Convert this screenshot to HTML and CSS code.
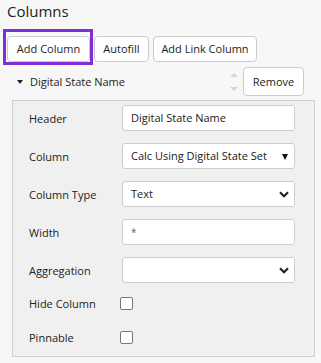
FILE: index.html
```html
<!DOCTYPE html>
<html>
<head>
<meta charset="utf-8">
<link rel="stylesheet" href="styles.css">
</head>
<body>
<div class="page">
  <h1 class="title">Columns</h1>
  <div class="toolbar">
    <button class="btn">Add Column</button>
    <button class="btn">Autofill</button>
    <button class="btn">Add Link Column</button>
    <div class="focus-ring"></div>
  </div>
  <div class="item-head">
    <span class="caret"></span>
    <span class="item-name">Digital State Name</span>
    <span class="sorter">
      <span class="arrow-up"></span>
      <span class="arrow-down"></span>
    </span>
    <button class="btn btn-remove">Remove</button>
  </div>
  <div class="panel">
    <div class="row">
      <span class="label">Header</span>
      <div class="field">Digital State Name</div>
    </div>
    <div class="row">
      <span class="label">Column</span>
      <div class="field select">Calc Using Digital State Set<span class="tri"></span></div>
    </div>
    <div class="row">
      <span class="label">Column Type</span>
      <div class="field select">Text<svg class="chev" width="10" height="7" viewBox="0 0 10 7"><path d="M1 1.2 L5 5.2 L9 1.2" fill="none" stroke="#222" stroke-width="2.2"/></svg></div>
    </div>
    <div class="row">
      <span class="label">Width</span>
      <div class="field star">*</div>
    </div>
    <div class="row">
      <span class="label">Aggregation</span>
      <div class="field select"><svg class="chev" width="10" height="7" viewBox="0 0 10 7"><path d="M1 1.2 L5 5.2 L9 1.2" fill="none" stroke="#222" stroke-width="2.2"/></svg></div>
    </div>
    <div class="row check-row first-check">
      <span class="label">Hide Column</span>
      <span class="checkbox"></span>
    </div>
    <div class="row check-row">
      <span class="label">Pinnable</span>
      <span class="checkbox"></span>
    </div>
  </div>
</div>
</body>
</html>
```
FILE: styles.css
```css
* { box-sizing: border-box; }
html, body { margin: 0; padding: 0; }
body {
  background: #f7f7f7;
  font-family: "Segoe UI", "Open Sans", "Noto Sans", sans-serif;
  font-size: 11px;
  color: #222;
  width: 321px;
  height: 363px;
  overflow: hidden;
}
.page { padding: 0 0 0 7px; }
.title {
  margin: 0;
  padding-top: 1px;
  font-size: 15px;
  font-weight: normal;
  line-height: 20px;
  color: #222;
  height: 36px;
}
.toolbar {
  position: relative;
  display: flex;
  gap: 4px;
  height: 26px;
}
.btn {
  font-family: inherit;
  font-size: 11px;
  color: #222;
  background: #fff;
  border: 1px solid #ccc;
  border-radius: 4px;
  height: 26px;
  padding: 0;
  line-height: 24px;
  margin: 0;
  white-space: nowrap;
  text-align: center;
}
.toolbar .btn:nth-child(1) { width: 83px; }
.toolbar .btn:nth-child(2) { width: 55px; }
.toolbar .btn:nth-child(3) { width: 104px; }
.focus-ring {
  position: absolute;
  left: -4px;
  top: -7px;
  width: 90px;
  height: 36px;
  border: 3px solid #7e2fd8;
  pointer-events: none;
}
.item-head {
  display: flex;
  align-items: center;
  height: 34px;
  padding-top: 5px;
  white-space: nowrap;
}
.caret {
  width: 0; height: 0;
  border-left: 3.5px solid transparent;
  border-right: 3.5px solid transparent;
  border-top: 4px solid #222;
  margin-left: 10px;
  margin-right: 7px;
}
.item-name { flex: 0 0 199px; width: 199px; }
.sorter {
  display: flex;
  flex-direction: column;
  justify-content: space-between;
  height: 18px;
  width: 10px;
  align-items: center;
  margin-top: 1px;
}
.arrow-up {
  width: 0; height: 0;
  border-left: 4px solid transparent;
  border-right: 4px solid transparent;
  border-bottom: 4px solid #d6d6d6;
}
.arrow-down {
  width: 0; height: 0;
  border-left: 4px solid transparent;
  border-right: 4px solid transparent;
  border-top: 4px solid #d6d6d6;
}
.btn-remove {
  margin-left: 4px;
  width: 61px;
  height: 29px;
  line-height: 27px;
}
.panel {
  margin: 4px 0 0 5px;
  width: 303px;
  height: 257px;
  background: #f0f0f0;
  border: 1px solid #cfcfcf;
  padding: 4px 0 0 16px;
}
.row {
  display: flex;
  align-items: center;
  height: 26px;
  margin-bottom: 12px;
}
.label { width: 93px; flex: 0 0 93px; }
.field {
  width: 173px;
  height: 26px;
  background: #fff;
  border: 1px solid #cccccc;
  border-radius: 3px;
  padding: 0 8px;
  line-height: 24px;
  position: relative;
  white-space: nowrap;
}
.star { color: #666; font-size: 10px; }
.select .tri {
  position: absolute;
  right: 6px;
  top: 10px;
  width: 0; height: 0;
  border-left: 3.5px solid transparent;
  border-right: 3.5px solid transparent;
  border-top: 6px solid #111;
}
.select .chev {
  position: absolute;
  right: 5px;
  top: 9px;
}
.check-row { height: 16px; margin-bottom: 18px; }
.first-check { margin-top: 11px; }
.checkbox {
  width: 13px;
  height: 13px;
  border: 1px solid #777;
  border-radius: 2px;
  background: #fff;
  margin-left: -2px;
}
```
